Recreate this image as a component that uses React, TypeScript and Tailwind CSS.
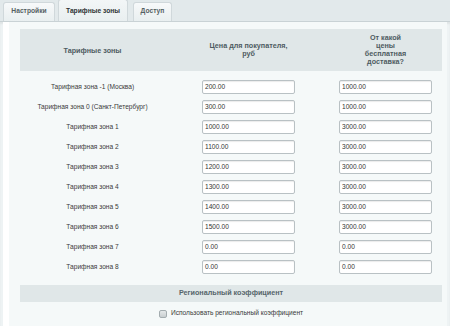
import React from "react";

const rows: [string, string, string][] = [
  ["Тарифная зона -1 (Москва)", "200.00", "1000.00"],
  ["Тарифная зона 0 (Санкт-Петербург)", "300.00", "1000.00"],
  ["Тарифная зона 1", "1000.00", "3000.00"],
  ["Тарифная зона 2", "1100.00", "3000.00"],
  ["Тарифная зона 3", "1200.00", "3000.00"],
  ["Тарифная зона 4", "1300.00", "3000.00"],
  ["Тарифная зона 5", "1400.00", "3000.00"],
  ["Тарифная зона 6", "1500.00", "3000.00"],
  ["Тарифная зона 7", "0.00", "0.00"],
  ["Тарифная зона 8", "0.00", "0.00"],
];

function Field({ value }: { value: string }) {
  return (
    <div className="w-[93px] h-[14px] bg-white border border-[#b9c1c4] rounded-[2px] shadow-[inset_0_1px_1px_rgba(0,0,0,0.08)] flex items-center pl-[2px] text-[6.6px] text-[#333] leading-none">
      {value}
    </div>
  );
}

export default function App() {
  return (
    <div
      className="w-[450px] h-[326px] overflow-hidden bg-[#e2e9eb]"
      style={{ fontFamily: '"Liberation Sans", Arial, sans-serif' }}
    >
      {/* tabs */}
      <div className="h-[22px] flex items-end pl-[3px] border-b border-[#c9d2d5]">
        <div className="w-[52px] h-[19px] mr-[3px] rounded-t-[3px] border border-b-0 border-[#d0d8db] bg-gradient-to-b from-[#f7f9fa] to-[#e9eff0] flex items-center justify-center pb-[2px] text-[6.7px] font-bold text-[#555f63]">
          Настройки
        </div>
        <div className="w-[70px] h-[22px] mr-[5px] rounded-t-[3px] border border-b-0 border-[#d0d8db] bg-gradient-to-b from-[#f3f6f7] to-[#e9eff0] flex items-center justify-center pt-[1px] text-[6.7px] font-bold text-[#2f3436]">
          Тарифные зоны
        </div>
        <div className="w-[39px] h-[19px] rounded-t-[3px] border border-b-0 border-[#d0d8db] bg-gradient-to-b from-[#f7f9fa] to-[#e9eff0] flex items-center justify-center pb-[2px] text-[6.7px] font-bold text-[#555f63]">
          Доступ
        </div>
      </div>

      {/* panel */}
      <div className="h-[304px] pl-[3px] pr-[3px] bg-[#eef3f4] shadow-[inset_0_2px_2px_rgba(0,0,0,0.06)]">
        <div className="h-full bg-white pl-[6px]">
          <div className="h-full bg-[#f5f9f9] pl-[11px] pr-[5px] pt-[7px]">
            {/* header */}
            <div className="w-[422px] h-[42px] bg-[#e0e7e8] grid grid-cols-[145px_167px_110px] items-center text-[7.2px] leading-[8px] font-bold text-[#4e5b61]">
              <div className="text-center pt-[1px]">Тарифные зоны</div>
              <div className="text-center">
                Цена для покупателя,
                <br />
                руб
              </div>
              <div className="pl-[7px]">
                <div className="w-[93px] text-center">
                  От какой
                  <br />
                  цены
                  <br />
                  бесплатная
                  <br />
                  доставка?
                </div>
              </div>
            </div>

            {/* rows */}
            <div className="mt-[6px] w-[422px] flex flex-col">
              {rows.map(([label, a, b]) => (
                <div
                  key={label}
                  className="h-[20px] grid grid-cols-[145px_167px_110px] items-center"
                >
                  <div className="text-center text-[6.6px] text-[#3a3a3a] leading-none">
                    {label}
                  </div>
                  <div className="flex justify-center">
                    <Field value={a} />
                  </div>
                  <div className="pl-[7px]">
                    <Field value={b} />
                  </div>
                </div>
              ))}
            </div>

            {/* regional */}
            <div className="mt-[8px] w-[422px] h-[17px] bg-[#e0e7e8] flex items-center justify-center text-[7.2px] font-bold text-[#56656b]">
              Региональный коэффициент
            </div>
            <div className="w-[422px] h-[23px] flex items-center justify-center gap-[4px]">
              <div className="w-[8px] h-[8px] rounded-[2px] border border-[#a3acaf] bg-gradient-to-b from-[#e4e8e9] to-[#c9cfd1]" />
              <span className="text-[6.6px] text-[#3a3a3a] leading-none">
                Использовать региональный коэффициент
              </span>
            </div>
          </div>
        </div>
      </div>
    </div>
  );
}
